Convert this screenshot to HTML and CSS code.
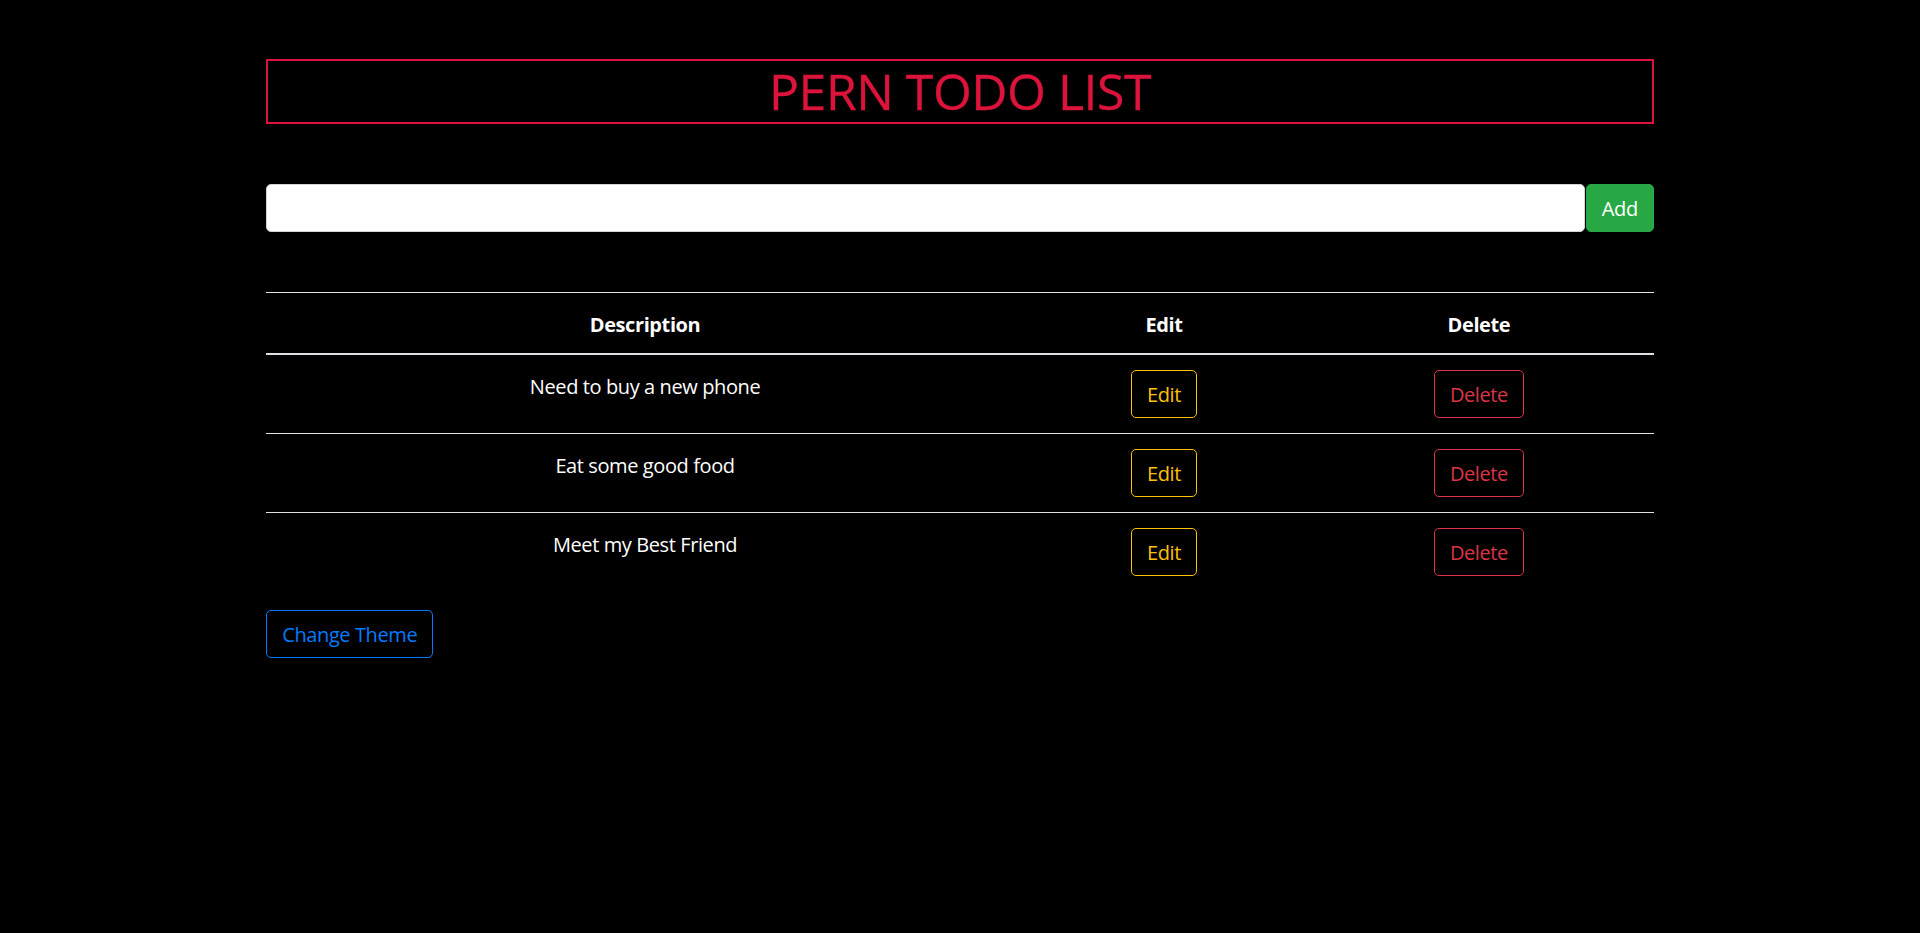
FILE: index.html
```html
<!DOCTYPE html>
<html lang="en">
<head>
<meta charset="utf-8">
<title>PERN TODO LIST</title>
<link rel="stylesheet" href="styles.css">
</head>
<body>
<div class="container">
  <h1 class="title">PERN TODO LIST</h1>
  <form class="add-form">
    <input class="add-input" type="text" value="">
    <button class="btn btn-success" type="button">Add</button>
  </form>
  <table class="todo-table">
    <thead>
      <tr>
        <th class="col-desc">Description</th>
        <th class="col-edit">Edit</th>
        <th class="col-del">Delete</th>
      </tr>
    </thead>
    <tbody>
      <tr>
        <td class="desc">Need to buy a new phone</td>
        <td><button class="btn btn-outline-warning" type="button">Edit</button></td>
        <td><button class="btn btn-outline-danger" type="button">Delete</button></td>
      </tr>
      <tr>
        <td class="desc">Eat some good food</td>
        <td><button class="btn btn-outline-warning" type="button">Edit</button></td>
        <td><button class="btn btn-outline-danger" type="button">Delete</button></td>
      </tr>
      <tr>
        <td class="desc">Meet my Best Friend</td>
        <td><button class="btn btn-outline-warning" type="button">Edit</button></td>
        <td><button class="btn btn-outline-danger" type="button">Delete</button></td>
      </tr>
    </tbody>
  </table>
  <button class="btn btn-outline-primary" type="button">Change Theme</button>
</div>
</body>
</html>
```

FILE: styles.css
```css
html, body {
  margin: 0;
  padding: 0;
  background: #000;
}
body {
  font-family: "Open Sans", "Noto Sans", "Liberation Sans", sans-serif;
  font-size: 20px;
  line-height: 30px;
  letter-spacing: -0.4px;
  color: #fff;
}
.container {
  max-width: 1425px;
  padding: 0 18.75px;
  margin: 0 auto;
  box-sizing: border-box;
}
.title {
  margin: 59px 0 0;
  border: 2px solid #dc143c;
  color: #dc143c;
  font-size: 50px;
  line-height: 61px;
  font-weight: 400;
  letter-spacing: -0.5px;
  text-align: center;
  -webkit-text-stroke: 0.3px #dc143c;
}
.add-form {
  display: flex;
  margin-top: 60px;
}
.add-input {
  flex: 1;
  height: 48px;
  box-sizing: border-box;
  border: 1px solid #ced4da;
  border-radius: 5px;
  background: #fff;
  padding: 7px 15px;
  font: inherit;
  margin: 0 1px 0 0;
}
.btn {
  display: inline-block;
  box-sizing: border-box;
  height: 48px;
  padding: 9px 15px 7px;
  font-family: inherit;
  font-size: 20px;
  line-height: 30px;
  letter-spacing: -0.4px;
  border: 1px solid transparent;
  border-radius: 5px;
  background: transparent;
  cursor: pointer;
}
.btn-success {
  background: #28a745;
  border-color: #28a745;
  color: #fff;
}
.btn-outline-warning {
  color: #ffc107;
  border-color: #ffc107;
}
.btn-outline-danger {
  color: #dc3545;
  border-color: #dc3545;
}
.btn-outline-primary {
  color: #007bff;
  border-color: #007bff;
}
.todo-table {
  width: 100%;
  margin-top: 60px;
  margin-bottom: 19px;
  border-collapse: collapse;
  color: #fff;
}
.todo-table th,
.todo-table td {
  padding: 15px;
  border-top: 1px solid #dee2e6;
  text-align: center;
  vertical-align: top;
}
.todo-table thead th {
  padding: 17px 15px 13px;
  font-weight: 700;
  vertical-align: bottom;
  border-bottom: 2px solid #dee2e6;
}
.todo-table td.desc {
  padding: 17px 15px 13px;
}
.col-desc { width: 54.6%; }
.col-edit { width: 20.2%; }
.col-del { width: 25.2%; }
```
